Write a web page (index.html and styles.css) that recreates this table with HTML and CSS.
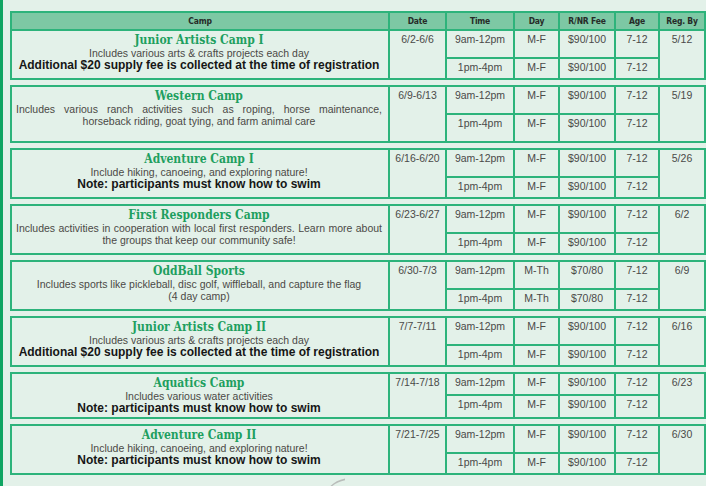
FILE: index.html
```html
<!DOCTYPE html>
<html lang="en">
<head>
<meta charset="utf-8">
<title>Camp Schedule</title>
<link rel="stylesheet" href="styles.css">
</head>
<body>
<div class="page">
  <div class="bar"></div>
  <main class="sched">

    <section class="grp grp-head">
      <div class="th">Camp</div>
      <div class="th">Date</div>
      <div class="th">Time</div>
      <div class="th">Day</div>
      <div class="th">R/NR Fee</div>
      <div class="th">Age</div>
      <div class="th">Reg. By</div>

      <div class="camp">
        <p class="ttl">Junior Artists Camp I</p>
        <p class="desc">Includes various arts &amp; crafts projects each day</p>
        <p class="note">Additional $20 supply fee is collected at the time of registration</p>
      </div>
      <div class="td span">6/2-6/6</div>
      <div class="td">9am-12pm</div><div class="td">M-F</div><div class="td">$90/100</div><div class="td">7-12</div>
      <div class="td span">5/12</div>
      <div class="td">1pm-4pm</div><div class="td">M-F</div><div class="td">$90/100</div><div class="td">7-12</div>
    </section>

    <section class="grp grp-tall">
      <div class="camp">
        <p class="ttl">Western Camp</p>
        <p class="desc"><span class="just">Includes various ranch activities such as roping, horse maintenance,</span><span class="ctr">horseback riding, goat tying, and farm animal care</span></p>
      </div>
      <div class="td span">6/9-6/13</div>
      <div class="td">9am-12pm</div><div class="td">M-F</div><div class="td">$90/100</div><div class="td">7-12</div>
      <div class="td span">5/19</div>
      <div class="td">1pm-4pm</div><div class="td">M-F</div><div class="td">$90/100</div><div class="td">7-12</div>
    </section>

    <section class="grp">
      <div class="camp">
        <p class="ttl">Adventure Camp I</p>
        <p class="desc">Include hiking, canoeing, and exploring nature!</p>
        <p class="note">Note: participants must know how to swim</p>
      </div>
      <div class="td span">6/16-6/20</div>
      <div class="td">9am-12pm</div><div class="td">M-F</div><div class="td">$90/100</div><div class="td">7-12</div>
      <div class="td span">5/26</div>
      <div class="td">1pm-4pm</div><div class="td">M-F</div><div class="td">$90/100</div><div class="td">7-12</div>
    </section>

    <section class="grp">
      <div class="camp">
        <p class="ttl">First Responders Camp</p>
        <p class="desc"><span class="just">Includes activities in cooperation with local first responders. Learn more about</span><span class="ctr">the groups that keep our community safe!</span></p>
      </div>
      <div class="td span">6/23-6/27</div>
      <div class="td">9am-12pm</div><div class="td">M-F</div><div class="td">$90/100</div><div class="td">7-12</div>
      <div class="td span">6/2</div>
      <div class="td">1pm-4pm</div><div class="td">M-F</div><div class="td">$90/100</div><div class="td">7-12</div>
    </section>

    <section class="grp">
      <div class="camp">
        <p class="ttl">OddBall Sports</p>
        <p class="desc"><span class="ctr">Includes sports like pickleball, disc golf, wiffleball, and capture the flag</span><span class="ctr">(4 day camp)</span></p>
      </div>
      <div class="td span">6/30-7/3</div>
      <div class="td">9am-12pm</div><div class="td">M-Th</div><div class="td">$70/80</div><div class="td">7-12</div>
      <div class="td span">6/9</div>
      <div class="td">1pm-4pm</div><div class="td">M-Th</div><div class="td">$70/80</div><div class="td">7-12</div>
    </section>

    <section class="grp">
      <div class="camp">
        <p class="ttl">Junior Artists Camp II</p>
        <p class="desc">Includes various arts &amp; crafts projects each day</p>
        <p class="note">Additional $20 supply fee is collected at the time of registration</p>
      </div>
      <div class="td span">7/7-7/11</div>
      <div class="td">9am-12pm</div><div class="td">M-F</div><div class="td">$90/100</div><div class="td">7-12</div>
      <div class="td span">6/16</div>
      <div class="td">1pm-4pm</div><div class="td">M-F</div><div class="td">$90/100</div><div class="td">7-12</div>
    </section>

    <section class="grp grp-short">
      <div class="camp">
        <p class="ttl">Aquatics Camp</p>
        <p class="desc">Includes various water activities</p>
        <p class="note">Note: participants must know how to swim</p>
      </div>
      <div class="td span">7/14-7/18</div>
      <div class="td">9am-12pm</div><div class="td">M-F</div><div class="td">$90/100</div><div class="td">7-12</div>
      <div class="td span">6/23</div>
      <div class="td">1pm-4pm</div><div class="td">M-F</div><div class="td">$90/100</div><div class="td">7-12</div>
    </section>

    <section class="grp">
      <div class="camp">
        <p class="ttl">Adventure Camp II</p>
        <p class="desc">Include hiking, canoeing, and exploring nature!</p>
        <p class="note">Note: participants must know how to swim</p>
      </div>
      <div class="td span">7/21-7/25</div>
      <div class="td">9am-12pm</div><div class="td">M-F</div><div class="td">$90/100</div><div class="td">7-12</div>
      <div class="td span">6/30</div>
      <div class="td">1pm-4pm</div><div class="td">M-F</div><div class="td">$90/100</div><div class="td">7-12</div>
    </section>

    <div class="swoosh">
      <svg width="20" height="10" viewBox="0 0 20 10"><path d="M1 9.5 C5 5 10 2 17 0.5 L17 2.2 C11 3.5 6 6 2.5 9.8 Z" fill="#b9bdba"/></svg>
    </div>
  </main>
</div>
</body>
</html>
```

FILE: styles.css
```css
html, body {
  margin: 0;
  padding: 0;
  height: 486px;
  overflow: hidden;
  background: #e3f1e9;
}

.page {
  display: flex;
  height: 486px;
  font-family: "Liberation Sans", Arial, sans-serif;
}

.bar {
  width: 3px;
  flex: none;
  background: #10a562;
}

.sched {
  padding: 11px 0 0 7px;
  display: flex;
  flex-direction: column;
}

.grp {
  display: grid;
  grid-template-columns: 376px 55px 66px 43px 54px 42px 44px;
  grid-template-rows: 26px 19px;
  gap: 2px;
  padding: 2px;
  background: #2db37b;
  margin-bottom: 5px;
  width: max-content;
}

.grp-head {
  grid-template-rows: 16px 26px 19px;
}

.grp-tall {
  grid-template-rows: 26px 26px;
}

.grp-short {
  grid-template-rows: 20px 21px;
}

.th {
  background: #7dc8a4;
  color: #262b28;
  font-family: "DejaVu Sans Condensed", "Liberation Sans", sans-serif;
  font-stretch: condensed;
  font-weight: bold;
  font-size: 8.5px;
  display: flex;
  align-items: center;
  justify-content: center;
  letter-spacing: -0.2px;
}

.camp {
  grid-row: span 2;
  background: #e3f1e9;
  padding: 2px 6px 0 4px;
  text-align: center;
  overflow: hidden;
}

.camp p {
  margin: 0;
}

.ttl {
  font-family: "DejaVu Serif Condensed", "DejaVu Serif", serif;
  font-stretch: condensed;
  font-weight: bold;
  font-size: 12px;
  line-height: 14px;
  color: #1e9f5f;
}

.desc {
  font-size: 10.5px;
  line-height: 12px;
  color: #4b4946;
}

.just {
  display: block;
  text-align: justify;
  text-align-last: justify;
}

.ctr {
  display: block;
  text-align: center;
}

.note {
  font-size: 12px;
  line-height: 13px;
  font-weight: bold;
  color: #161616;
}

.td {
  background: #e3f1e9;
  color: #4a4a48;
  font-size: 10.5px;
  line-height: 13px;
  padding-top: 2px;
  text-align: center;
}

.td.span {
  grid-row: span 2;
}

.swoosh {
  padding-left: 318px;
  height: 10px;
  margin-top: -2px;
}

.swoosh svg {
  display: block;
}
```
